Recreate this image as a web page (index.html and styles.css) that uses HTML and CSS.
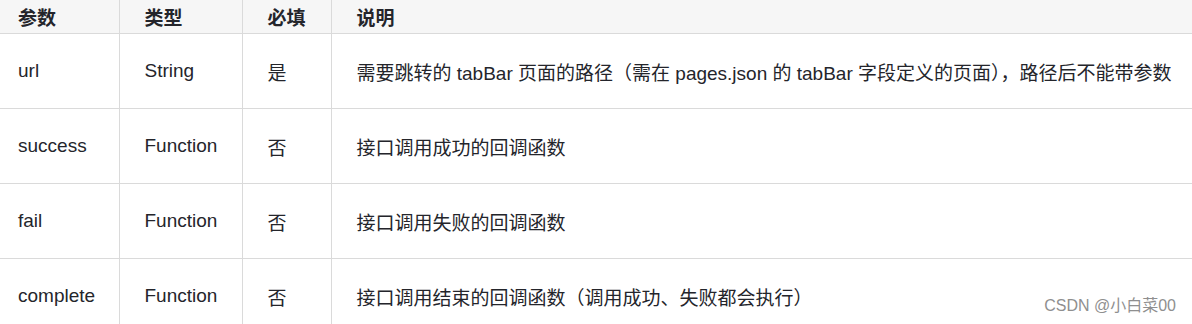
FILE: index.html
```html
<!DOCTYPE html>
<html lang="zh">
<head>
<meta charset="utf-8">
<title>switchTab 参数</title>
<link rel="stylesheet" href="styles.css">
</head>
<body>
<div class="page">
  <table class="params">
    <colgroup>
      <col class="c-name">
      <col class="c-type">
      <col class="c-req">
      <col class="c-desc">
    </colgroup>
    <thead>
      <tr>
        <th>参数</th>
        <th>类型</th>
        <th>必填</th>
        <th>说明</th>
      </tr>
    </thead>
    <tbody>
      <tr>
        <td>url</td>
        <td>String</td>
        <td>是</td>
        <td>需要跳转的 tabBar 页面的路径（需在 pages.json 的 tabBar 字段定义的页面），路径后不能带参数</td>
      </tr>
      <tr>
        <td>success</td>
        <td>Function</td>
        <td>否</td>
        <td>接口调用成功的回调函数</td>
      </tr>
      <tr>
        <td>fail</td>
        <td>Function</td>
        <td>否</td>
        <td>接口调用失败的回调函数</td>
      </tr>
      <tr>
        <td>complete</td>
        <td>Function</td>
        <td>否</td>
        <td>接口调用结束的回调函数（调用成功、失败都会执行）</td>
      </tr>
    </tbody>
  </table>
  <div class="watermark">CSDN @小白菜00</div>
</div>
</body>
</html>
```

FILE: styles.css
```css
html, body {
  margin: 0;
  padding: 0;
  background: #ffffff;
}

body {
  width: 1192px;
  height: 324px;
  overflow: hidden;
  font-family: "Liberation Sans", "Noto Sans CJK SC", sans-serif;
  color: #24252b;
}

.page {
  position: relative;
  width: 1192px;
  height: 324px;
}

.params {
  width: 1192px;
  table-layout: fixed;
  border-collapse: collapse;
  font-size: 19px;
}

.c-name { width: 119px; }
.c-type { width: 123px; }
.c-req { width: 89px; }

.params th,
.params td {
  text-align: left;
  padding: 0 0 0 25px;
  border-left: 1px solid #dadada;
  border-bottom: 1px solid #dadada;
  white-space: nowrap;
  overflow: hidden;
}

.params th:first-child,
.params td:first-child {
  border-left: none;
  padding-left: 18px;
}

.params th {
  height: 33px;
  background: #f6f6f6;
  font-weight: bold;
}

.params td {
  height: 74px;
}

.watermark {
  position: absolute;
  right: 16px;
  bottom: 8px;
  font-size: 16px;
  color: #8f8f8f;
  text-shadow: 0 0 1px #ffffff;
}
```
